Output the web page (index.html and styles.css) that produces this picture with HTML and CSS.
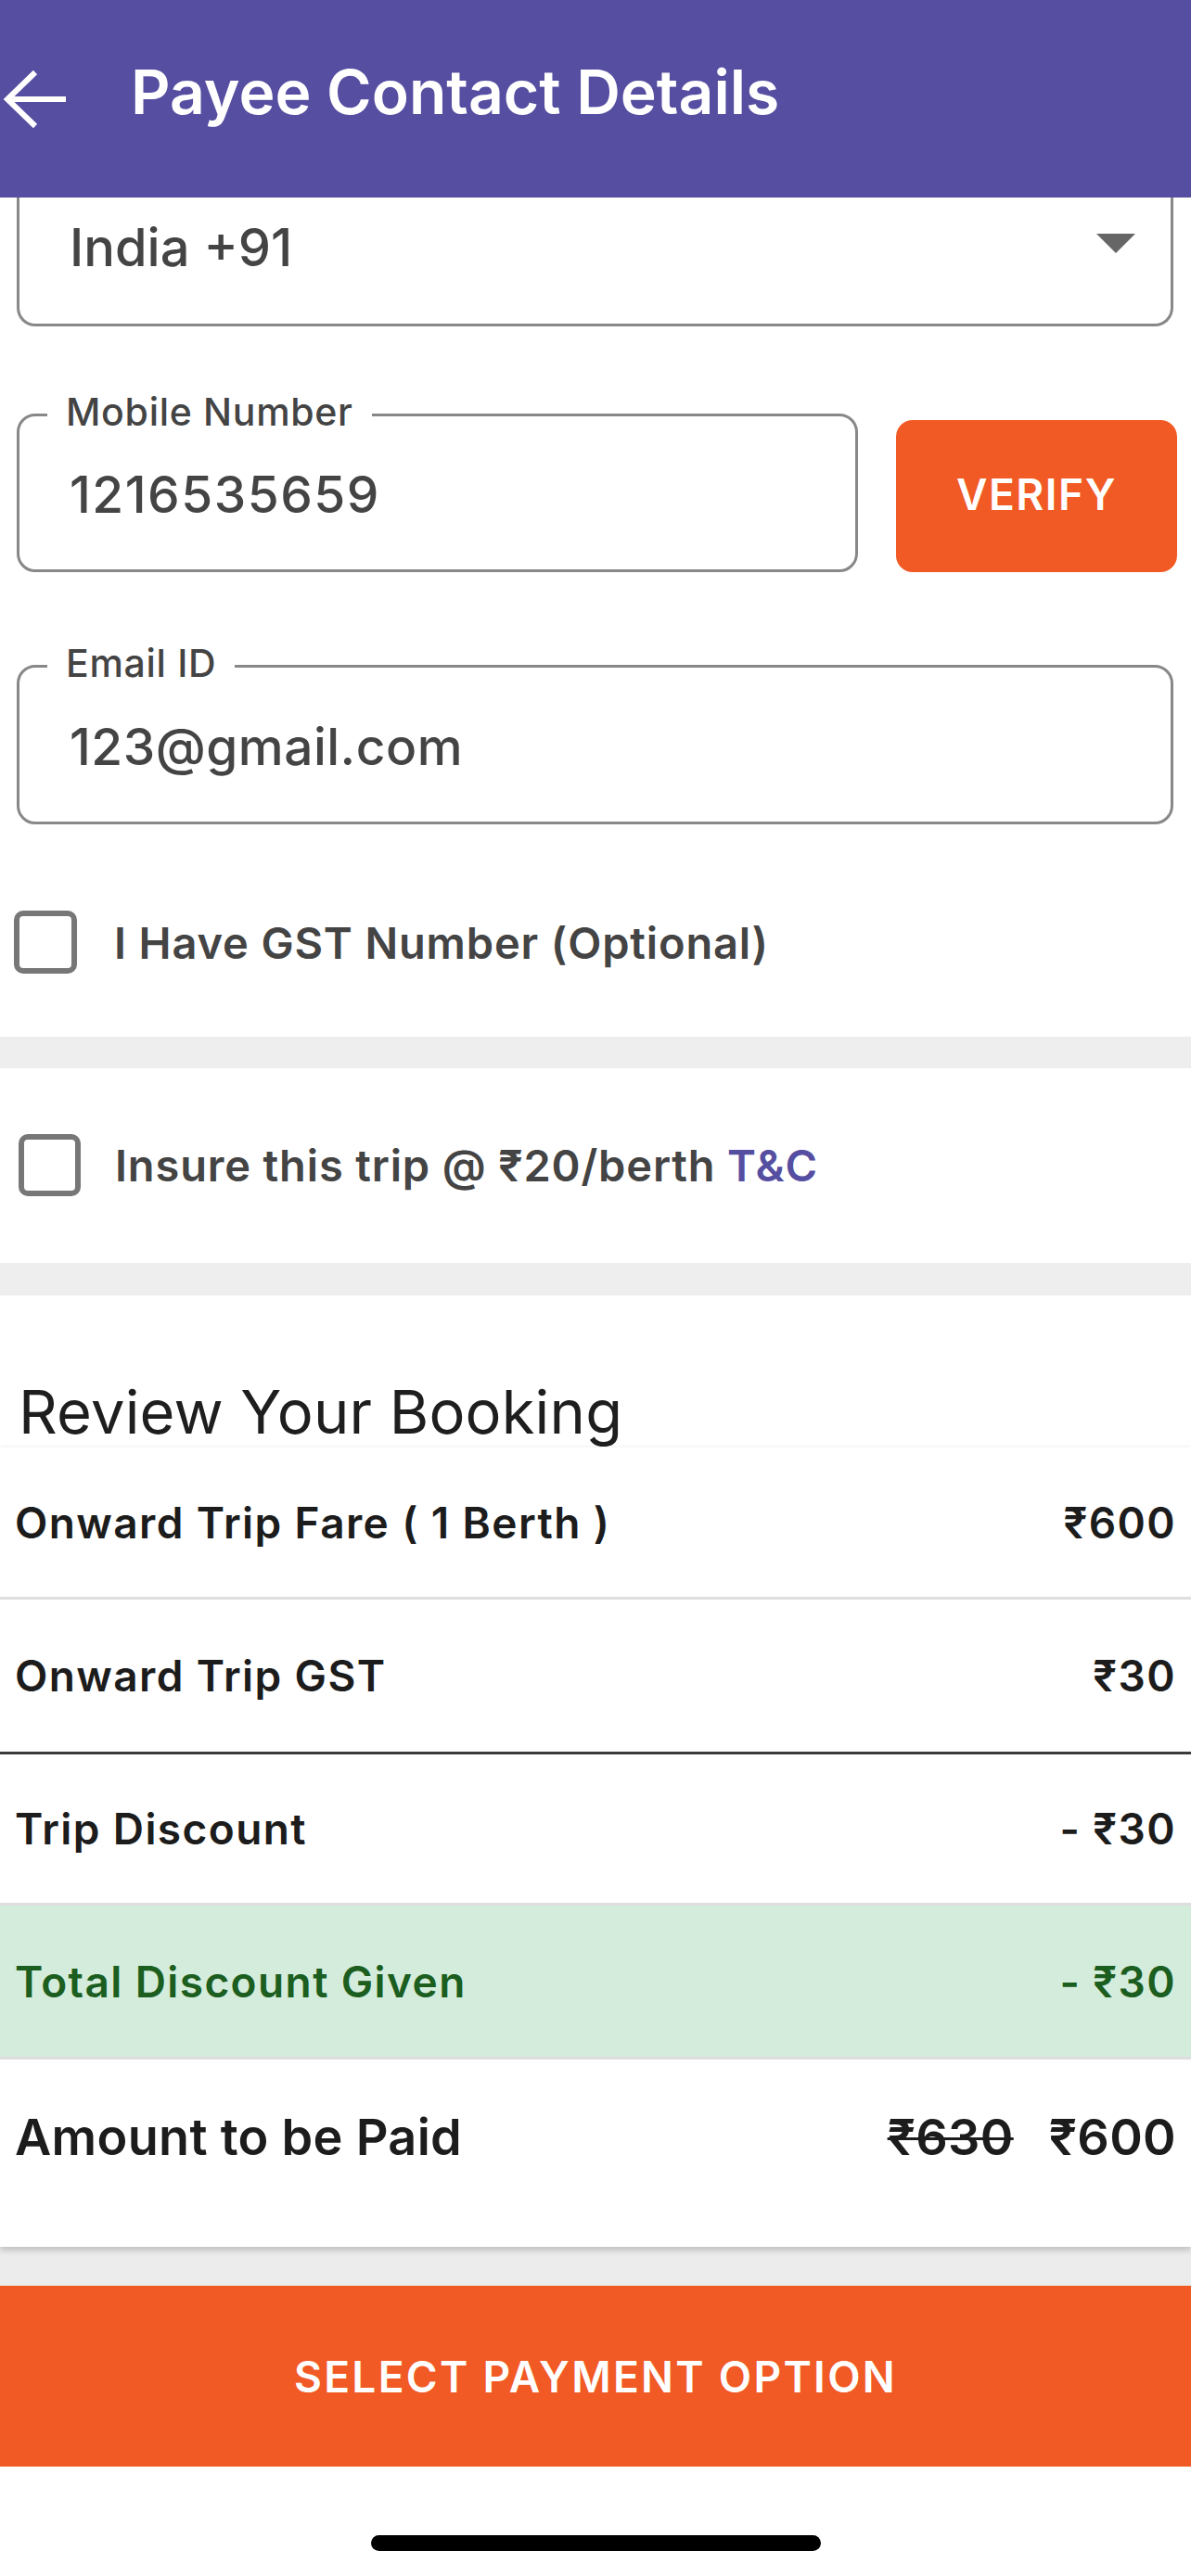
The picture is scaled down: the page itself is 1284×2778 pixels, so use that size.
FILE: index.html
```html
<!DOCTYPE html>
<html lang="en">
<head>
<meta charset="utf-8">
<title>Payee Contact Details</title>
<link rel="stylesheet" href="styles.css">
</head>
<body>
<header class="appbar">
  <svg class="back" viewBox="0 0 72 72" width="72" height="72" aria-hidden="true">
    <path d="M71 36 H9 M38 7 L8 36 L38 65" fill="none" stroke="#ffffff" stroke-width="6"/>
  </svg>
  <h1 class="title">Payee Contact Details</h1>
</header>

<main class="form">
  <div class="select">
    <span class="select-text">India +91</span>
    <span class="caret"></span>
  </div>

  <div class="mobile-row">
    <fieldset class="field field-mobile">
      <legend class="field-label">Mobile Number</legend>
      <div class="field-value field-digits">1216535659</div>
    </fieldset>
    <button class="verify" type="button">VERIFY</button>
  </div>

  <fieldset class="field field-email">
    <legend class="field-label">Email ID</legend>
    <div class="field-value">123@gmail.com</div>
  </fieldset>

  <div class="check-row check-gst">
    <span class="checkbox"></span>
    <span class="check-text">I Have GST Number (Optional)</span>
  </div>
</main>

<div class="band"></div>

<div class="check-row check-insure">
  <span class="checkbox"></span>
  <span class="check-text">Insure this trip @ ₹20/berth <span class="link">T&amp;C</span></span>
</div>

<div class="band band-2"></div>

<section class="review">
  <h2 class="review-title">Review Your Booking</h2>
  <div class="card">
    <div class="row">
      <span>Onward Trip Fare ( 1 Berth )</span>
      <span>₹600</span>
    </div>
    <div class="divider"></div>
    <div class="row row-tall">
      <span>Onward Trip GST</span>
      <span>₹30</span>
    </div>
    <div class="divider divider-dark"></div>
    <div class="row row-short">
      <span>Trip Discount</span>
      <span>- ₹30</span>
    </div>
    <div class="divider"></div>
    <div class="row row-green">
      <span>Total Discount Given</span>
      <span>- ₹30</span>
    </div>
    <div class="divider"></div>
    <div class="row row-total">
      <span>Amount to be Paid</span>
      <span class="amounts"><s class="old">₹630</s><span>₹600</span></span>
    </div>
  </div>
</section>

<div class="gap"></div>

<button class="pay" type="button">SELECT PAYMENT OPTION</button>

<div class="home">
  <span class="indicator"></span>
</div>
</body>
</html>
```

FILE: styles.css
```css
* { box-sizing: border-box; }

html, body {
  margin: 0;
  padding: 0;
  background: #ffffff;
}

body {
  width: 1284px;
  height: 2778px;
  overflow: hidden;
  font-family: Inter, "Noto Sans", "DejaVu Sans", sans-serif;
  color: #444444;
}

/* App bar */
.appbar {
  height: 213px;
  background: #554ea1;
  display: flex;
  align-items: center;
}

.back {
  flex: none;
  display: block;
}

.title {
  margin: 0 0 16px 69px;
  font-size: 66px;
  font-weight: 600;
  letter-spacing: 0;
  color: #ffffff;
  line-height: 1;
}

/* Form */
.form {
  display: block;
}

.select {
  height: 139px;
  margin: 0 19px 0 18px;
  border: 3px solid #888888;
  border-top: 0;
  border-radius: 0 0 20px 20px;
  display: flex;
  align-items: center;
  justify-content: space-between;
  padding: 0 38px 28px 54px;
}

.select-text {
  font-size: 56px;
  font-weight: 500;
  color: #444444;
  letter-spacing: 0;
  line-height: 1;
}

.caret {
  width: 0;
  height: 0;
  border-left: 21px solid transparent;
  border-right: 21px solid transparent;
  border-top: 21px solid #666666;
  margin-bottom: 10px;
}

.mobile-row {
  display: flex;
  align-items: flex-end;
  margin-top: 75px;
  padding-left: 18px;
}

.field {
  margin: 0;
  border: 3px solid #888888;
  border-radius: 20px;
  padding: 0 0 0 54px;
  min-width: 0;
}

.field-mobile {
  width: 907px;
}

.field-email {
  width: 1247px;
  margin: 81px 0 0 18px;
}

.field-label {
  margin-left: -24px;
  padding: 0 20px 6px 20px;
  height: 40px;
  font-size: 41px;
  line-height: 34px;
  font-weight: 500;
  color: #444444;
  letter-spacing: 0.7px;
}

.field-value {
  height: 147px;
  padding-bottom: 15px;
  display: flex;
  align-items: center;
  font-size: 55px;
  font-weight: 500;
  color: #444444;
  letter-spacing: 0.5px;
  line-height: 1;
}

.field-digits {
  letter-spacing: 1.5px;
}

.field-email .field-value {
  height: 148px;
  padding-bottom: 14px;
}

.verify {
  flex: none;
  width: 303px;
  height: 164px;
  margin-left: 41px;
  border: 0;
  border-radius: 18px;
  background: #f15a24;
  color: #ffffff;
  font-family: Inter, "Noto Sans", sans-serif;
  font-size: 46px;
  font-weight: 600;
  letter-spacing: 1.5px;
  padding: 0 0 4px 0;
}

/* Checkboxes */
.check-row {
  display: flex;
  align-items: center;
}

.check-gst {
  padding: 93px 0 68px 15px;
}

.check-insure {
  padding: 71px 0 72px 20px;
}

.checkbox {
  flex: none;
  width: 68px;
  height: 68px;
  border: 6px solid #777777;
  border-radius: 10px;
  background: #ffffff;
}

.check-insure .checkbox {
  width: 67px;
  height: 67px;
}

.check-text {
  margin-left: 40px;
  font-size: 47px;
  font-weight: 600;
  color: #444444;
  letter-spacing: 0.85px;
  line-height: 1;
}

.check-insure .check-text {
  margin-left: 37px;
}

.link {
  color: #554ea1;
}

.band {
  height: 34px;
  background: #eeeeee;
}

.band-2 {
  height: 35px;
}

/* Review */
.review {
  display: block;
}

.review-title {
  margin: 0;
  padding: 88px 0 0 20px;
  font-size: 65px;
  font-weight: 400;
  line-height: 76px;
  color: #1e1e1e;
  letter-spacing: 0.2px;
}

.card {
  background: #ffffff;
  box-shadow: 0 -2px 3px rgba(0, 0, 0, 0.03), 0 4px 6px rgba(0, 0, 0, 0.18);
  position: relative;
}

.row {
  height: 161px;
  padding: 0 16px;
  display: flex;
  align-items: center;
  justify-content: space-between;
  font-size: 46px;
  font-weight: 600;
  color: #1c1c1c;
  letter-spacing: 1.4px;
  line-height: 1;
}

.row-tall { height: 164px; }
.row-short { height: 160px; }

.divider {
  height: 3px;
  background: #dedede;
}

.divider-dark {
  background: #3a3a3a;
}

.row-green {
  height: 163px;
  background: #d4ecdc;
  color: #1b5e20;
}

.row-total {
  height: 202px;
  padding-bottom: 34px;
  font-size: 54px;
  letter-spacing: 0.3px;
}

.amounts {
  display: flex;
  gap: 38px;
}

.old {
  text-decoration: line-through;
  text-decoration-thickness: 3px;
}

/* Bottom */
.gap {
  height: 42px;
  background: #ececec;
}

.pay {
  display: flex;
  align-items: center;
  justify-content: center;
  width: 100%;
  height: 195px;
  border: 0;
  background: #f15a24;
  color: #ffffff;
  font-family: Inter, "Noto Sans", sans-serif;
  font-size: 46px;
  font-weight: 600;
  letter-spacing: 2.3px;
}

.home {
  height: 119px;
  display: flex;
  justify-content: center;
  align-items: flex-start;
  padding-top: 74px;
}

.indicator {
  width: 485px;
  height: 17px;
  border-radius: 9px;
  background: #000000;
}
```
